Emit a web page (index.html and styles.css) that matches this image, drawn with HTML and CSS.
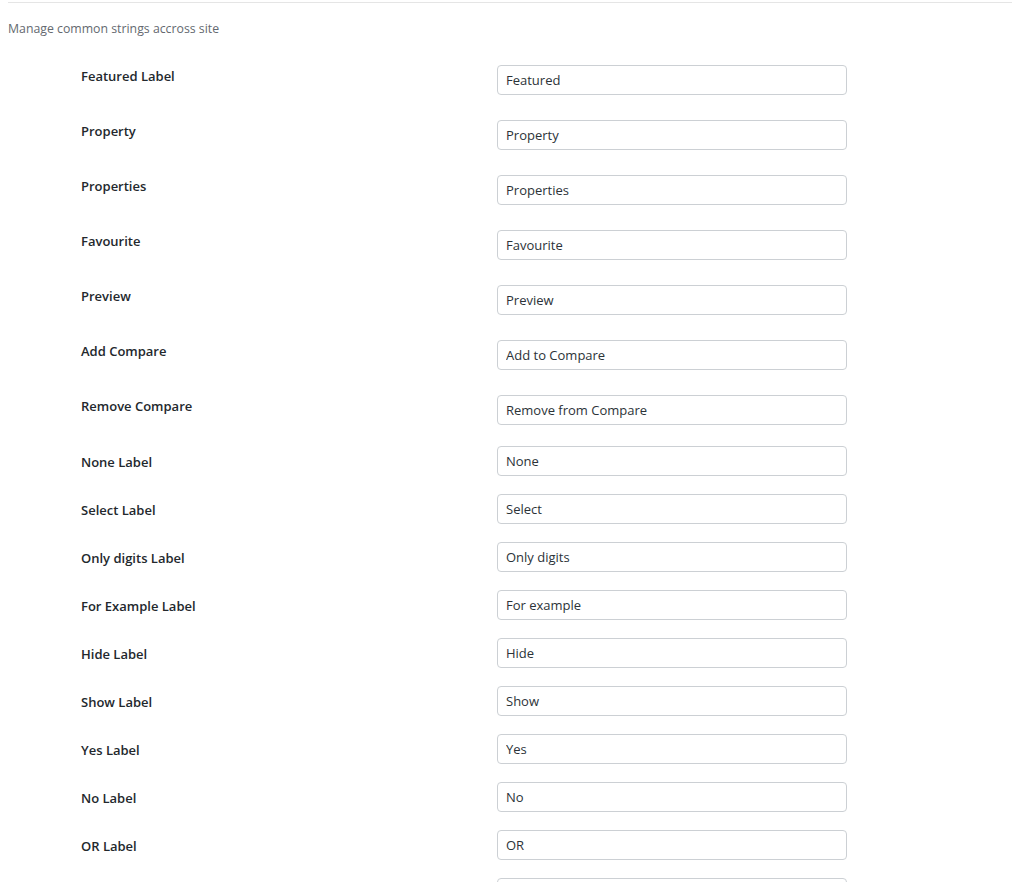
FILE: index.html
```html
<!DOCTYPE html>
<html lang="en">
<head>
  <meta charset="UTF-8">
  <title>Common Strings</title>
  <link rel="stylesheet" href="styles.css">
</head>
<body>

<div class="section">
  <p class="section-desc">Manage common strings accross site</p>

  <div class="form-table">
    <div class="field-row tall">
      <label class="field-label" for="f1">Featured Label</label>
      <input class="field-input" type="text" id="f1" value="Featured">
    </div>
    <div class="field-row tall">
      <label class="field-label" for="f2">Property</label>
      <input class="field-input" type="text" id="f2" value="Property">
    </div>
    <div class="field-row tall">
      <label class="field-label" for="f3">Properties</label>
      <input class="field-input" type="text" id="f3" value="Properties">
    </div>
    <div class="field-row tall">
      <label class="field-label" for="f4">Favourite</label>
      <input class="field-input" type="text" id="f4" value="Favourite">
    </div>
    <div class="field-row tall">
      <label class="field-label" for="f5">Preview</label>
      <input class="field-input" type="text" id="f5" value="Preview">
    </div>
    <div class="field-row tall">
      <label class="field-label" for="f6">Add Compare</label>
      <input class="field-input" type="text" id="f6" value="Add to Compare">
    </div>
    <div class="field-row tall">
      <label class="field-label" for="f7">Remove Compare</label>
      <input class="field-input" type="text" id="f7" value="Remove from Compare">
    </div>
    <div class="field-row">
      <label class="field-label" for="f8">None Label</label>
      <input class="field-input" type="text" id="f8" value="None">
    </div>
    <div class="field-row">
      <label class="field-label" for="f9">Select Label</label>
      <input class="field-input" type="text" id="f9" value="Select">
    </div>
    <div class="field-row">
      <label class="field-label" for="f10">Only digits Label</label>
      <input class="field-input" type="text" id="f10" value="Only digits">
    </div>
    <div class="field-row">
      <label class="field-label" for="f11">For Example Label</label>
      <input class="field-input" type="text" id="f11" value="For example">
    </div>
    <div class="field-row">
      <label class="field-label" for="f12">Hide Label</label>
      <input class="field-input" type="text" id="f12" value="Hide">
    </div>
    <div class="field-row">
      <label class="field-label" for="f13">Show Label</label>
      <input class="field-input" type="text" id="f13" value="Show">
    </div>
    <div class="field-row">
      <label class="field-label" for="f14">Yes Label</label>
      <input class="field-input" type="text" id="f14" value="Yes">
    </div>
    <div class="field-row">
      <label class="field-label" for="f15">No Label</label>
      <input class="field-input" type="text" id="f15" value="No">
    </div>
    <div class="field-row">
      <label class="field-label" for="f16">OR Label</label>
      <input class="field-input" type="text" id="f16" value="OR">
    </div>
    <div class="field-row">
      <label class="field-label" for="f17"></label>
      <input class="field-input" type="text" id="f17" value="">
    </div>
  </div>
</div>

</body>
</html>
```

FILE: styles.css
```css
body {
  margin: 0;
  background: #fff;
  font-family: 'Open Sans', 'Noto Sans', sans-serif;
  font-size: 13px;
  color: #23282d;
}

.section {
  margin: 2px 0 0 8px;
  border-top: 1px solid #e5e5e5;
}

.section-desc {
  margin: 16px 0 13px;
  font-size: 12.3px;
  line-height: 20px;
  color: #646970;
}

.form-table {
  display: flex;
  flex-direction: column;
  padding-left: 73px;
}

.field-row {
  display: grid;
  grid-template-columns: 416px 350px;
  align-items: start;
  padding: 9px 0;
}

.field-row.tall {
  padding: 13px 0 12px;
}

.field-label {
  font-weight: 600;
  line-height: 18px;
  margin-top: 7px;
  color: #23282d;
}

.field-row.tall .field-label {
  margin-top: 2px;
}

.field-input {
  box-sizing: border-box;
  width: 350px;
  height: 30px;
  margin: 0;
  padding: 0 8px;
  border: 1px solid #ccd0d4;
  border-radius: 4px;
  background: #fff;
  font-family: inherit;
  font-size: 13px;
  color: #2c3338;
  outline: none;
}
```
